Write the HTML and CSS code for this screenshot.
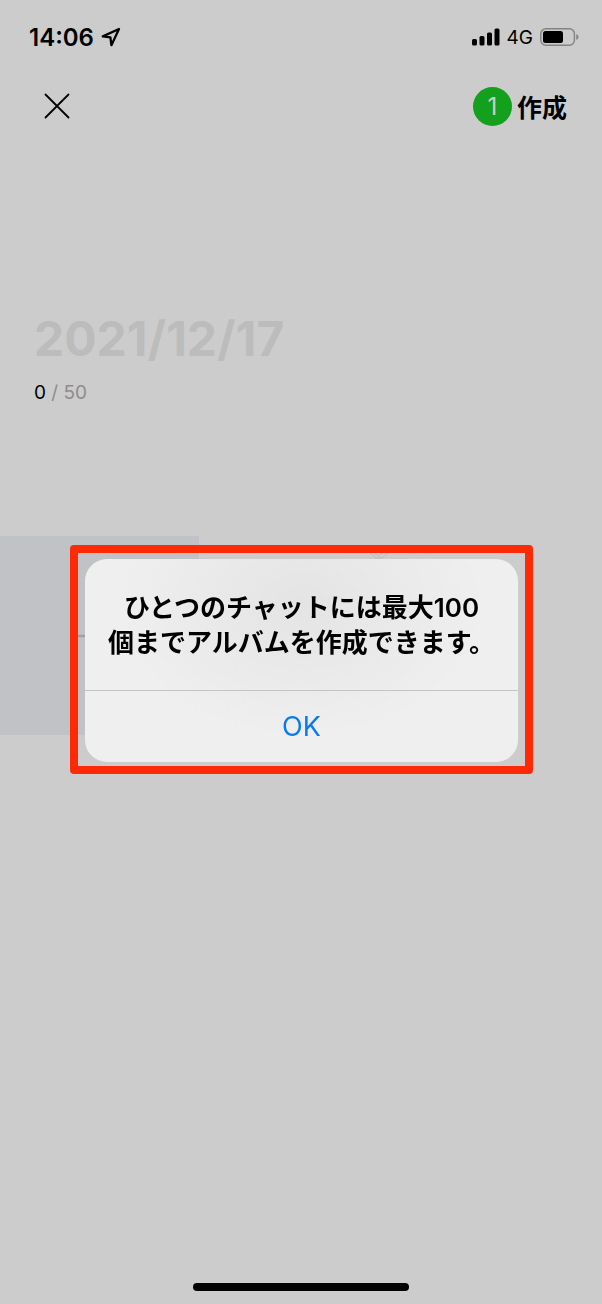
FILE: index.html
```html
<!DOCTYPE html>
<html lang="ja">
<head>
    <meta charset="UTF-8">
    <meta name="viewport" content="width=device-width, initial-scale=1.0">
    <title>アルバムを作成</title>
    <link rel="stylesheet" href="styles.css">
</head>
<body>
    <div class="status-bar">
        <div class="status-left">
            <span class="clock">14:06</span>
            <svg width="20" height="20" viewBox="0 0 20 20" fill="none" stroke="#000" stroke-width="2.3" stroke-linejoin="round">
                <path d="M18 2L1.8 9.4L9.4 10.4L10.4 18.2Z"/>
            </svg>
        </div>
        <div class="status-right">
            <svg width="28" height="18" viewBox="0 0 28 18">
                <rect x="0" y="11" width="5" height="6.5" rx="1.5"/>
                <rect x="7.5" y="8" width="5" height="9.5" rx="1.5"/>
                <rect x="15" y="4.5" width="5" height="13" rx="1.5"/>
                <rect x="22.5" y="0.5" width="5" height="17" rx="1.5"/>
            </svg>
            <span class="network">4G</span>
            <svg width="39" height="18" viewBox="0 0 39 18">
                <rect x="0.8" y="0.8" width="33.6" height="16.4" rx="5" fill="none" stroke="#838383" stroke-width="1.4"/>
                <rect x="3" y="3" width="20" height="12" rx="2.5"/>
                <path d="M36.3 6Q38.6 6.8 38.6 9Q38.6 11.2 36.3 12Z" fill="#838383"/>
            </svg>
        </div>
    </div>

    <header class="header">
        <button class="close" type="button" aria-label="閉じる">
            <svg width="26" height="26" viewBox="0 0 26 26" fill="none" stroke="#000" stroke-width="1.8" stroke-linecap="round">
                <path d="M1.5 1.5L24.5 24.5M24.5 1.5L1.5 24.5"/>
            </svg>
        </button>
        <button class="create" type="button">
            <span class="badge">1</span>
            <span>作成</span>
        </button>
    </header>

    <main class="album">
        <input class="album-name" type="text" placeholder="2021/12/17" aria-label="アルバム名">
        <p class="count"><span class="current">0</span> / 50</p>
        <div class="photos">
            <button class="add-photo" type="button" aria-label="写真を追加">
                <svg width="44" height="44" viewBox="0 0 44 44" stroke="#9fa0a2" stroke-width="2.5">
                    <path d="M0 22H44M22 0V44"/>
                </svg>
            </button>
            <div class="photo">
                <svg width="20" height="12" viewBox="0 0 20 12" fill="none" stroke="#bcbcbc" stroke-width="1">
                    <path d="M1 1L7 6H13L19 1M5 1L9 4L14 1"/>
                </svg>
            </div>
        </div>
    </main>

    <div class="home-bar"></div>

    <div class="overlay">
        <div class="frame">
            <div class="dialog" role="alertdialog" aria-labelledby="message">
                <p class="message" id="message">ひとつのチャットには最大100<br>個までアルバムを作成できます。</p>
                <button class="ok" type="button">OK</button>
            </div>
        </div>
    </div>
</body>
</html>
```
FILE: styles.css
```css
* {
    box-sizing: border-box;
}
body {
    margin: 0;
    min-height: 100vh;
    display: flex;
    flex-direction: column;
    background: #ccc;
    color: #000;
    font-family: Inter, "Noto Sans CJK JP", sans-serif;
}
button {
    padding: 0;
    border: 0;
    background: none;
    color: inherit;
    font: inherit;
}
svg {
    display: block;
}
.status-bar {
    display: flex;
    justify-content: space-between;
    align-items: center;
    height: 74px;
    padding: 0 23px 0 29px;
}
.status-left, .status-right {
    display: flex;
    align-items: center;
    gap: 7px;
}
.clock {
    font-size: 24px;
    font-weight: 600;
}
.network {
    font-size: 19px;
}
.header {
    display: flex;
    justify-content: space-between;
    align-items: center;
    height: 64px;
    padding: 0 35px 0 44px;
}
.create {
    display: flex;
    align-items: center;
    gap: 5px;
    font-size: 25px;
    font-weight: 700;
}
.badge {
    width: 39px;
    height: 39px;
    border-radius: 50%;
    background: #12a01d;
    color: #ccc;
    font-size: 24px;
    font-weight: 400;
    line-height: 39px;
    text-align: center;
}
.album {
    flex: 1;
    padding-top: 168px;
}
.album-name {
    display: block;
    width: 100%;
    height: 64px;
    padding: 0 34px;
    border: 0;
    outline: none;
    background: none;
    font-family: inherit;
    font-size: 48px;
    font-weight: 700;
}
.album-name::placeholder {
    color: #bcbcbc;
    opacity: 1;
}
.count {
    margin: 10px 34px 0;
    color: #8c8c8c;
    font-size: 19px;
    line-height: 26px;
}
.current {
    color: #000;
}
.photos {
    display: grid;
    grid-template-columns: repeat(3, 1fr);
    gap: 2px;
    margin-top: 130px;
}
.add-photo {
    display: flex;
    align-items: center;
    justify-content: center;
    aspect-ratio: 1;
    background: #c1c2c5;
}
.photo {
    display: flex;
    justify-content: flex-end;
    padding: 16px 12px;
}
.home-bar {
    align-self: center;
    width: 36%;
    height: 8px;
    margin-bottom: 13px;
    border-radius: 4px;
    background: #000;
}
.overlay {
    position: fixed;
    inset: 0;
    display: flex;
    align-items: center;
    justify-content: center;
    padding: 15px 69px 0 70px;
}
.frame {
    flex: 1;
    padding: 6px 7px 4px;
    border: 8px solid #fd2a05;
    border-radius: 4px;
}
.dialog {
    overflow: hidden;
    border-radius: 22px;
    background: radial-gradient(ellipse at 50% 22%, #e4e4e4, #efefef 60%);
    text-align: center;
}
.message {
    margin: 0;
    padding: 31px 0 30px;
    border-bottom: 1px solid #c4c4c4;
    font-size: 26px;
    font-weight: 600;
    line-height: 35px;
}
.ok {
    display: block;
    width: 100%;
    height: 71px;
    color: #0a7aef;
    font-size: 27px;
}
```
